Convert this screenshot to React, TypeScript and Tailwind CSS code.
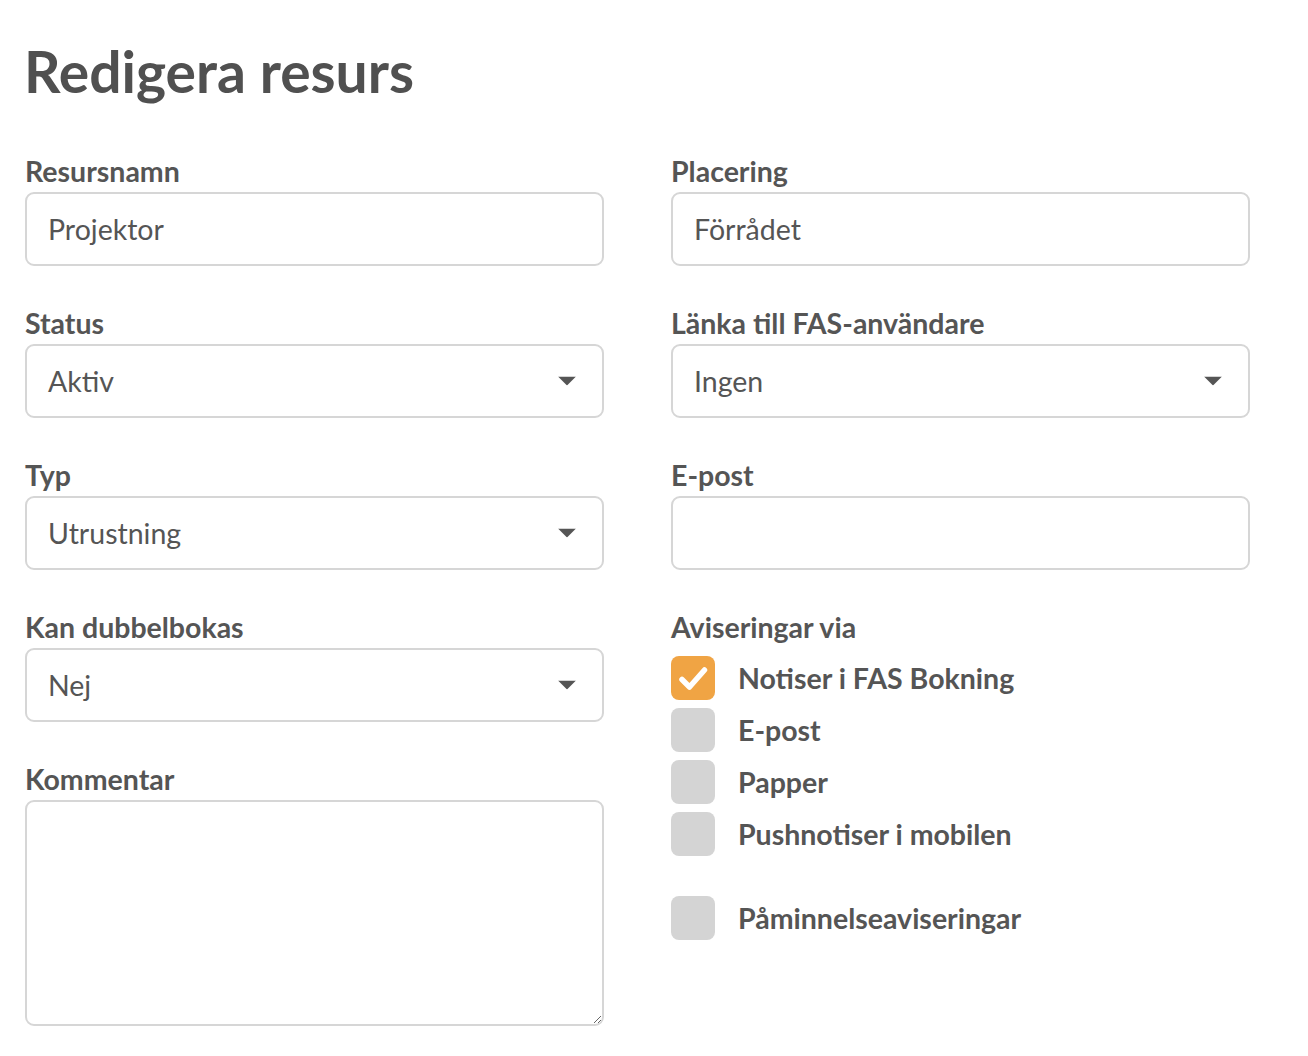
import { ChangeEvent, useState } from "react";

const font = { fontFamily: "Lato, 'Noto Sans', sans-serif" };

const Caret = () => (
  <svg
    aria-hidden={true}
    width="18"
    height="9"
    viewBox="0 0 18 9"
    className="pointer-events-none absolute top-1/2 right-[28px] -translate-y-1/2"
  >
    <path d="M0 0h18L9 9z" fill="#555" />
  </svg>
);

const Label = ({ children }: { children: React.ReactNode }) => (
  <label className="mb-[5px] block text-[28.5px] leading-[31px] font-bold text-[#555]">
    {children}
  </label>
);

const TextField = ({ label, value }: { label: string; value: string }) => {
  const [text, setText] = useState(value);
  return (
    <div className="mb-[42px]">
      <Label>{label}</Label>
      <input
        value={text}
        onChange={(e: ChangeEvent<HTMLInputElement>) => setText(e.target.value)}
        className="block h-[74px] w-full rounded-[9px] border-2 border-[#d6d6d6] bg-white px-[21px] text-[28.5px] text-[#555] outline-none"
        style={font}
      />
    </div>
  );
};

const SelectField = ({ label, value }: { label: string; value: string }) => (
  <div className="mb-[42px]">
    <Label>{label}</Label>
    <div className="relative">
      <div className="flex h-[74px] w-full items-center rounded-[9px] border-2 border-[#d6d6d6] bg-white px-[21px] text-[28.5px] text-[#555]">
        {value}
      </div>
      <Caret />
    </div>
  </div>
);

const Check = ({ label, checked }: { label: string; checked?: boolean }) => (
  <div className="flex items-center gap-[23px]">
    <span
      className={
        checked
          ? "flex size-[44px] items-center justify-center rounded-[8px] bg-[#f0a444]"
          : "block size-[44px] rounded-[8px] bg-[#d4d4d4]"
      }
    >
      {checked && (
        <svg width="44" height="44" viewBox="0 0 44 44" aria-hidden={true}>
          <path
            d="M11 23.5l7.5 7.5L33.5 14"
            fill="none"
            stroke="#fff"
            strokeWidth="5.5"
            strokeLinecap="round"
            strokeLinejoin="round"
          />
        </svg>
      )}
    </span>
    <span className="text-[28.5px] font-bold text-[#555]">{label}</span>
  </div>
);

export default function App() {
  return (
    <main className="min-h-screen bg-white px-[25px] pt-[37px]" style={font}>
      <h1 className="mb-[51px] -ml-px text-[57px] leading-[68px] font-bold text-[#505050]">
        Redigera resurs
      </h1>

      <div className="grid w-[1225px] grid-cols-2 gap-x-[67px]">
        <div>
          <TextField label="Resursnamn" value="Projektor" />
          <SelectField label="Status" value="Aktiv" />
          <SelectField label="Typ" value="Utrustning" />
          <SelectField label="Kan dubbelbokas" value="Nej" />
          <div>
            <Label>Kommentar</Label>
            <textarea
              className="block h-[226px] w-full rounded-[9px] border-2 border-[#d6d6d6] bg-white px-[21px] py-[16px] text-[28.5px] text-[#555] outline-none"
              style={font}
            />
          </div>
        </div>

        <div>
          <TextField label="Placering" value="Förrådet" />
          <SelectField label="Länka till FAS-användare" value="Ingen" />
          <TextField label="E-post" value="" />
          <div>
            <Label>Aviseringar via</Label>
            <div className="mt-[13px] flex flex-col gap-[8px]">
              <Check label="Notiser i FAS Bokning" checked />
              <Check label="E-post" />
              <Check label="Papper" />
              <Check label="Pushnotiser i mobilen" />
            </div>
            <div className="mt-[40px]">
              <Check label="Påminnelseaviseringar" />
            </div>
          </div>
        </div>
      </div>
    </main>
  );
}
